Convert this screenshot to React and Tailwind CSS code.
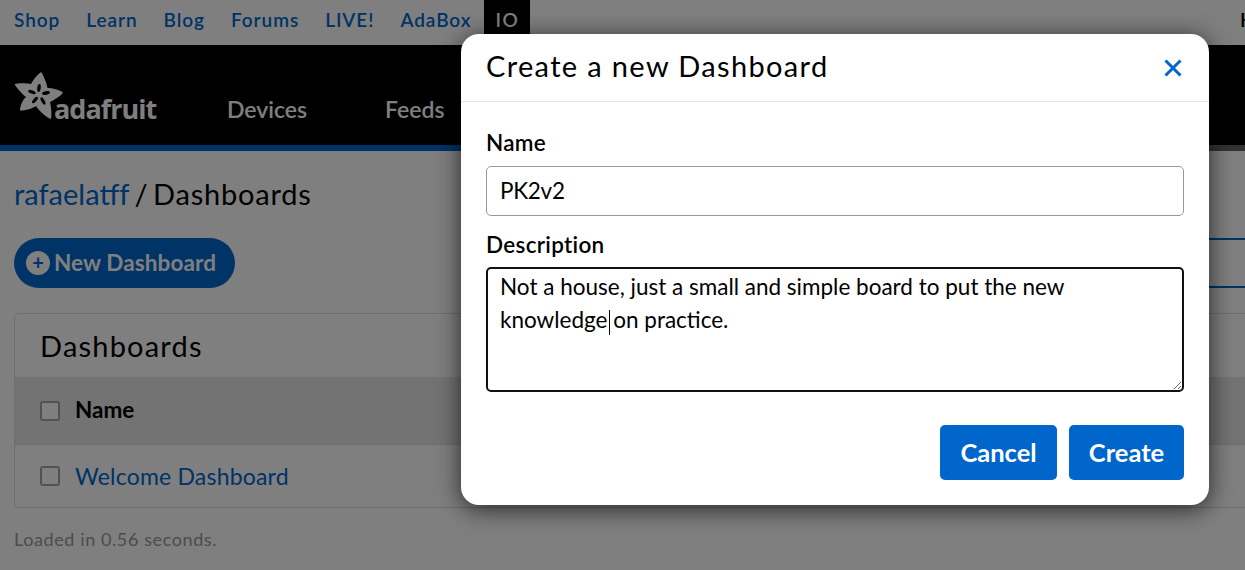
import React from "react";

const topLinks = ["Shop", "Learn", "Blog", "Forums", "LIVE!", "AdaBox"];

const AdafruitLogo = () => (
  <div className="relative h-[52px] w-[146px]">
    <svg viewBox="0 0 50 50" className="absolute left-0 top-0 h-[50px] w-[50px]">
      <path
        d="M27 1 C29 3 33 13 33.5 17 C38 17 46 19 49 21.5 C47 25 40 29 36 31 C37 35 38 43 37 48 C33 47 25 40 22 35 C18 38 9 40 6 39.5 C6 35 9 28 12 26 C8 23 2 16 0.500 13 C4 12 13 12 17 13 C19 9 24 3 27 1 Z"
        fill="#ffffff"
      />
      <g fill="#000">
        <ellipse cx="25" cy="17" rx="1.700" ry="4" transform="rotate(8 25 17)" />
        <ellipse cx="32" cy="22" rx="1.700" ry="4" transform="rotate(78 32 22)" />
        <ellipse cx="29" cy="30" rx="1.700" ry="4" transform="rotate(-30 29 30)" />
        <ellipse cx="21" cy="29" rx="1.700" ry="4" transform="rotate(40 21 29)" />
        <ellipse cx="18" cy="21" rx="1.700" ry="4" transform="rotate(-70 18 21)" />
      </g>
    </svg>
    <span className="absolute bottom-[-2px] left-[40px] font-['Open_Sans',sans-serif] text-[27px] font-bold leading-[32px] tracking-[-1px] text-white">
      adafruit
    </span>
  </div>
);

const Checkbox = () => (
  <span className="h-5 w-5 shrink-0 rounded-[3px] border-2 border-[#a4a4a4] bg-white" />
);

export default function App() {
  return (
    <div className="relative h-[570px] w-[1245px] overflow-hidden bg-white font-['Lato',sans-serif] text-black">
      {/* top links */}
      <div className="flex h-[45px] items-center pl-[14px]">
        <div className="flex h-full items-center gap-[26px] pb-[4px] text-[19px] font-semibold tracking-[0.95px] text-[#0066cc]">
          {topLinks.map((link) => (
            <a key={link}>{link}</a>
          ))}
        </div>
        <div className="ml-[13px] flex h-full w-[46px] items-center justify-center bg-black pb-[4px] text-[19px] font-semibold tracking-[1.5px] text-white">
          IO
        </div>
        <span className="ml-auto w-[5px] overflow-hidden pb-[4px] text-[19px] font-semibold">H</span>
      </div>

      {/* main header */}
      <div className="h-[100px] bg-black pl-[14px] pt-[26px]">
        <div className="flex items-start">
          <AdafruitLogo />
          <div className="ml-[67px] flex gap-[78px] pt-[21px] text-[23px] font-semibold text-white">
            <span>Devices</span>
            <span>Feeds</span>
          </div>
        </div>
      </div>
      <div className="flex h-[6px]">
        <div className="flex-1 bg-[#0066cc]" />
        <div className="w-[200px] bg-[#666666]" />
      </div>

      {/* page */}
      <div className="px-[14px]">
        <h1 className="mt-[25px] text-[29px] leading-[36px] [word-spacing:-2px]">
          <a className="text-[#0066cc]">rafaelatff</a> / <span className="tracking-[0.8px]">Dashboards</span>
        </h1>
        <div className="mt-[26px] flex items-center justify-between">
          <button className="flex h-[50px] w-[221px] items-center gap-[4px] rounded-full bg-[#0066cc] pl-[12px] text-[22.5px] font-bold tracking-[0.1px] text-white">
            <span className="flex h-6 w-6 items-center justify-center rounded-full bg-white pb-[2px] text-[20px] leading-none text-[#0066cc]">
              +
            </span>
            New Dashboard
          </button>
          <div className="mr-[-14px] h-[50px] w-[60px] border-y-2 border-[#0066cc]" />
        </div>

        <div className="mr-[-40px] mt-[25px] rounded-[5px] border border-[#dddddd]">
          <div className="flex h-[63px] items-center px-[25px] text-[29px] tracking-[1.2px]">Dashboards</div>
          <div className="flex h-[68px] items-center gap-[15px] border-b border-[#dddddd] bg-[#e6e6e6] px-[25px] text-[22.5px] font-bold">
            <Checkbox />
            <span className="pb-[2px]">Name</span>
          </div>
          <div className="flex h-[62px] items-center gap-[15px] px-[25px] text-[23px] tracking-[0.2px] text-[#0066cc]">
            <Checkbox />
            Welcome Dashboard
          </div>
        </div>

        <p className="mt-[18px] text-[18px] tracking-[0.6px] text-[#999999]">Loaded in 0.56 seconds.</p>
      </div>

      {/* modal overlay */}
      <div className="absolute inset-0 bg-black/50 pl-[461px] pt-[34px]">
        <div className="h-[471px] w-[748px] rounded-[18px] bg-white shadow-[0_4px_24px_rgba(0,0,0,0.7)]">
          <div className="flex h-[68px] items-center justify-between border-b border-[#e5e5e5] pl-[25px] pr-[27px]">
            <h2 className="pb-[4px] text-[29px] tracking-[1.35px]">Create a new Dashboard</h2>
            <svg viewBox="0 0 18 18" className="h-[18px] w-[18px]" fill="none" stroke="#0066cc" strokeWidth="3">
              <path d="M1.500 1.500 L16.500 16.500 M16.500 1.500 L1.500 16.500" />
            </svg>
          </div>

          <div className="px-[25px] pt-[26px]">
            <label className="block text-[22.5px] font-semibold leading-[30px] tracking-[0.3px]">Name</label>
            <input
              readOnly
              value="PK2v2"
              className="mt-[8px] block h-[50px] w-full rounded-[5px] border border-[#999999] px-[13px] pb-[2px] text-[22.5px] tracking-[-0.3px] outline-none"
            />
            <label className="mt-[14px] block text-[22.5px] font-semibold leading-[30px] tracking-[0.3px]">
              Description
            </label>
            <div className="relative mt-[7px]">
              <textarea
                readOnly
                value="Not a house, just a small and simple board to put the new knowledge on practice."
                className="block h-[125px] w-full resize-y rounded-[5px] border-2 border-[#111111] px-[12px] py-[1px] text-[22.5px] leading-[33px] outline-none"
              />
              <span className="absolute left-[123px] top-[43px] h-[25px] w-px bg-black" />
            </div>
            <div className="mt-[33px] flex justify-end gap-[12px]">
              <button className="h-[55px] w-[117px] rounded-[5px] bg-[#0066cc] text-[25.5px] font-bold text-white">
                Cancel
              </button>
              <button className="h-[55px] w-[115px] rounded-[5px] bg-[#0066cc] text-[25.5px] font-bold text-white">
                Create
              </button>
            </div>
          </div>
        </div>
      </div>
    </div>
  );
}
